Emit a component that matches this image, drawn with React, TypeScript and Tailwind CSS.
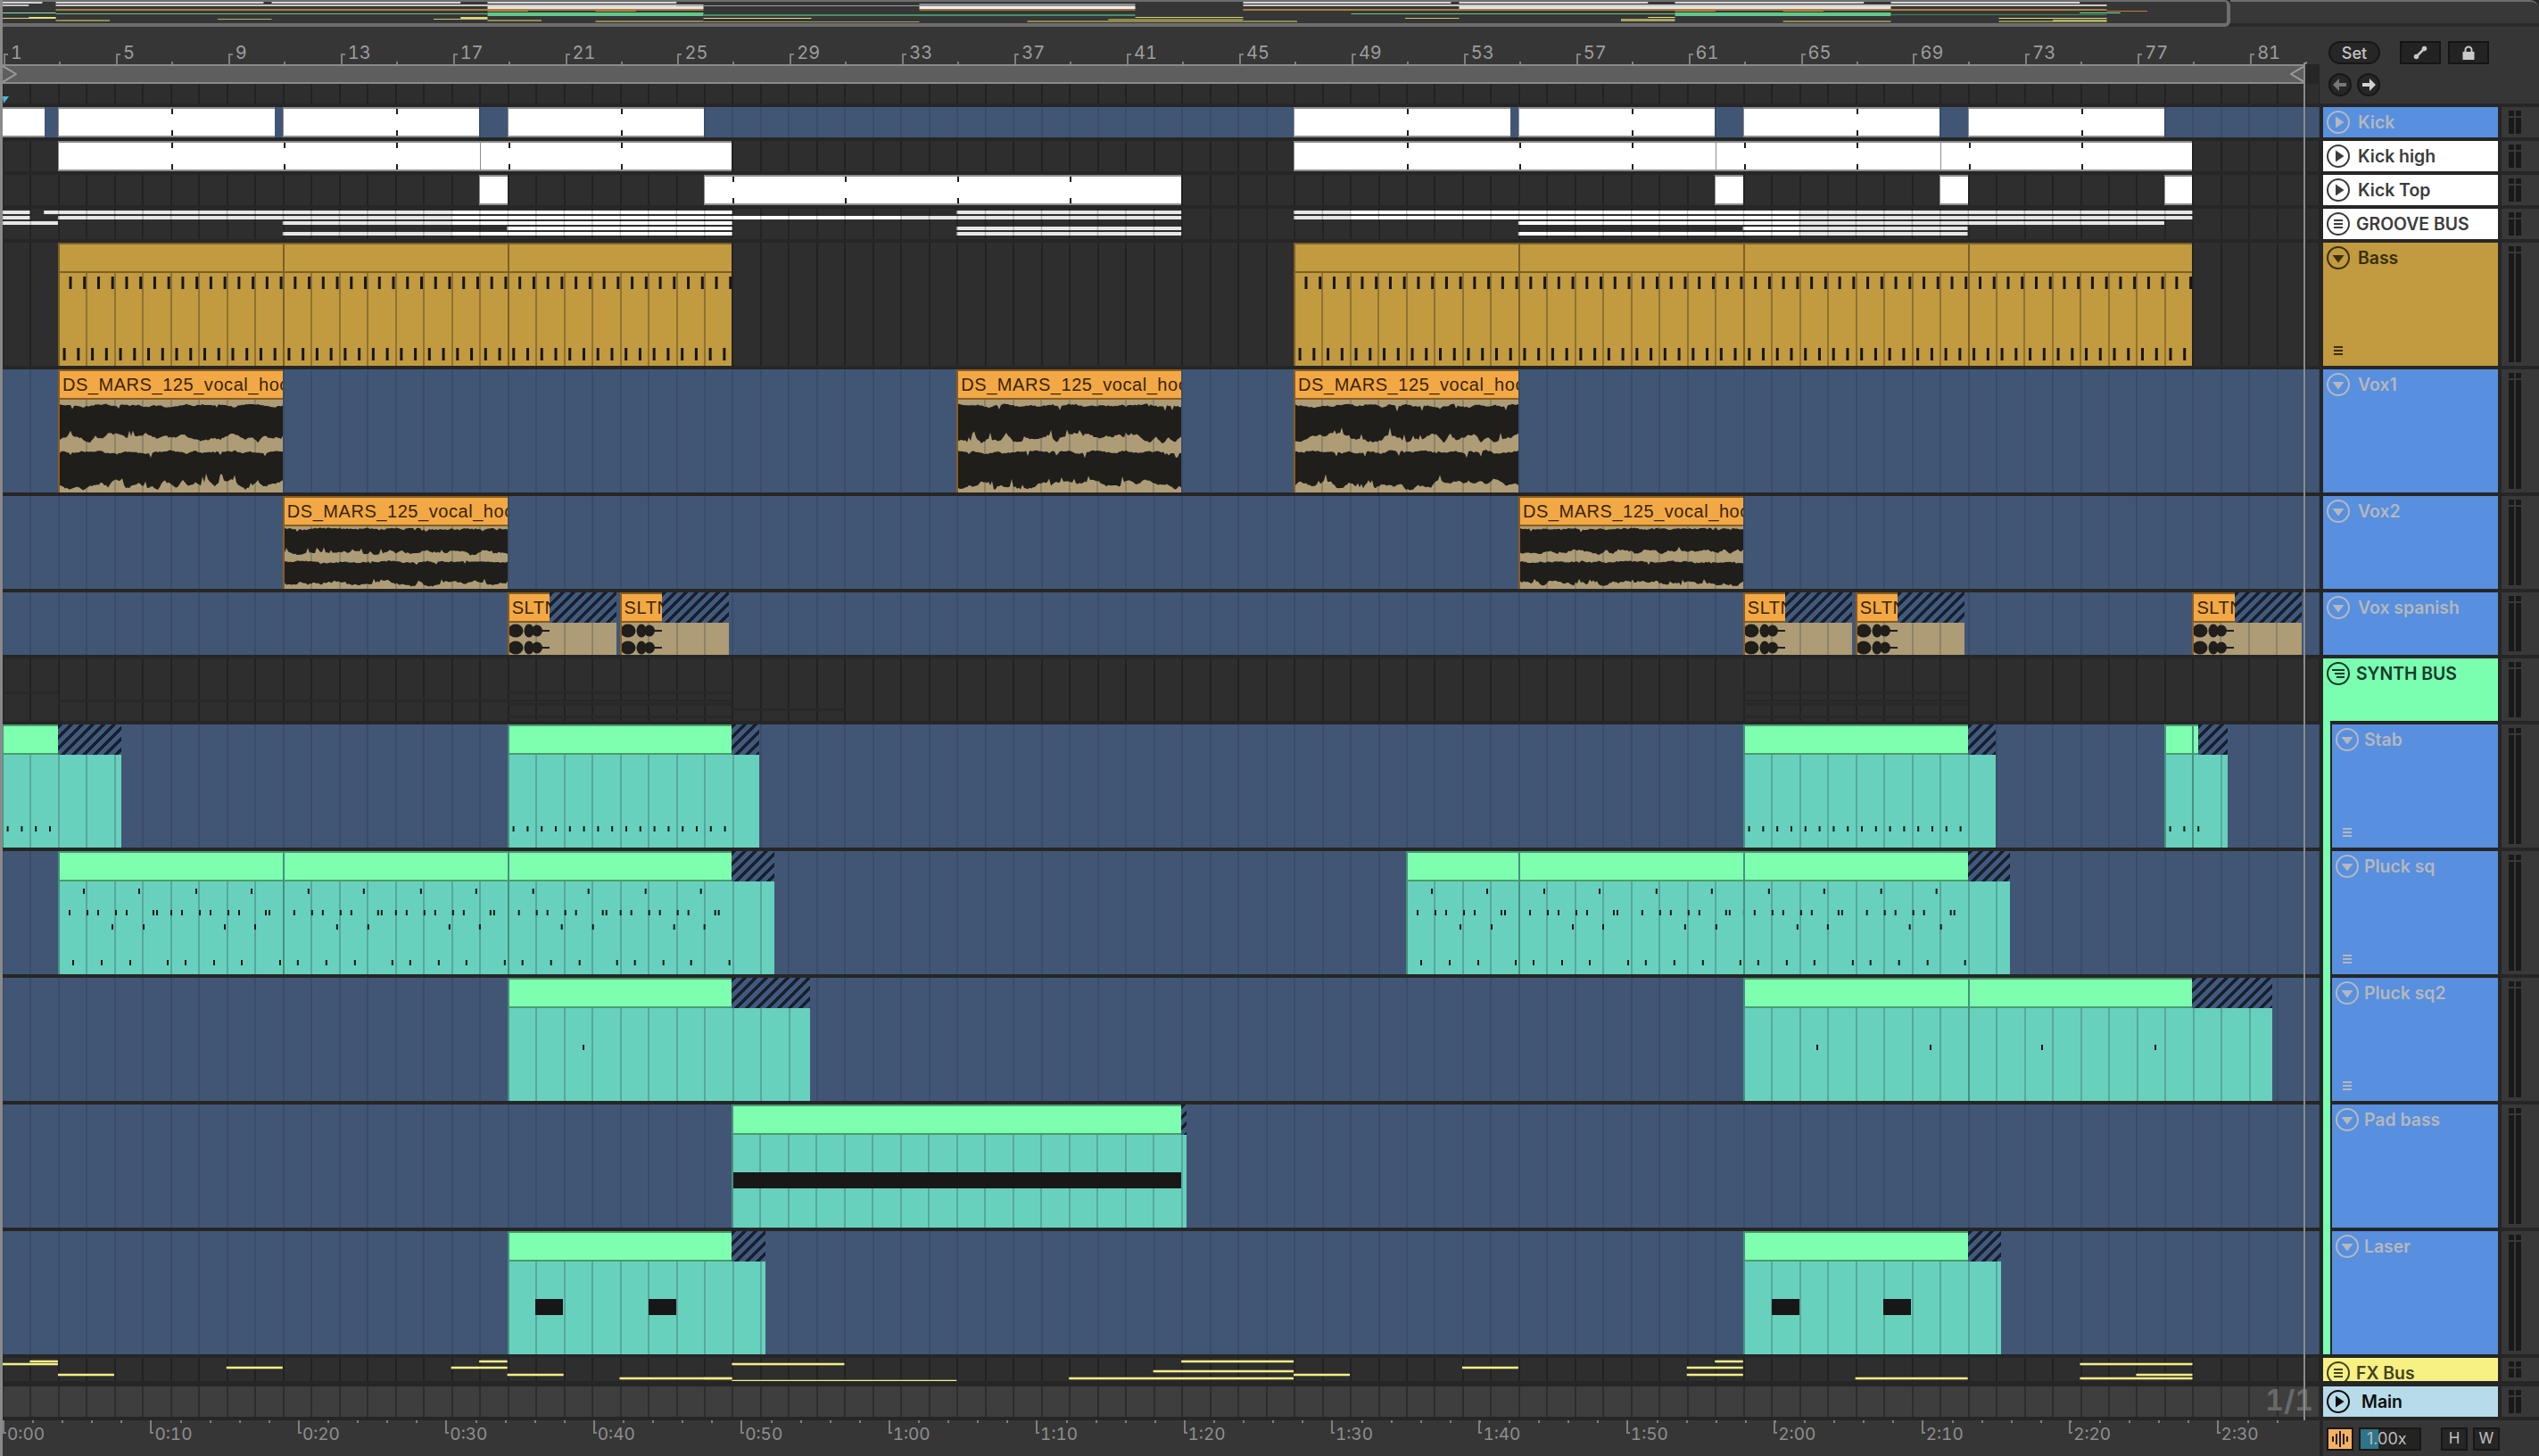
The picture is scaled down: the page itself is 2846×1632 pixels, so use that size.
import React from "react";

const BAR = 31.48;
const X = (b: number) => (b - 1) * BAR - 1;

const rng = (seed: number) => {
  let s = seed;
  return () => (s = (s * 16807) % 2147483647) / 2147483647;
};

const GRID_DARK = "bg-[#2e2e2e] bg-[repeating-linear-gradient(90deg,#222222_0_2px,transparent_2px_31.48px)] bg-position-[-1px_0]";
const GRID_BLUE = "bg-[#415675] bg-[repeating-linear-gradient(90deg,#394c6b_0_2px,transparent_2px_31.48px)] bg-position-[-1px_0]";
const GRID_MAIN = "bg-[#3e3e3e] bg-[repeating-linear-gradient(90deg,#2d2d2d_0_2px,transparent_2px_31.48px)] bg-position-[-1px_0]";

type Theme = { head: string; body: string; div: string; text: string };
const TEAL: Theme = {
  head: "bg-[#7effb0] border-[#4a9c6e]",
  body: "bg-[#67d1bd] bg-[repeating-linear-gradient(90deg,#56a89e_0_2px,transparent_2px_31.48px)]",
  div: "bg-[#45917f]",
  text: "",
};
const BASS: Theme = {
  head: "bg-[#c29a3f] border-[#7a6128]",
  body: "bg-[#c29a3f] bg-[repeating-linear-gradient(90deg,#8f7233_0_2px,transparent_2px_31.48px)]",
  div: "bg-[#7a6128]",
  text: "",
};
const VOX: Theme = {
  head: "bg-[#f2a945] border-[#8a5c20]",
  body: "bg-[#ae9c77] bg-[repeating-linear-gradient(90deg,#8d8468_0_2px,transparent_2px_31.48px)]",
  div: "bg-[#8a5c20]",
  text: "text-[#3a2408]",
};

type ClipProps = {
  from: number;
  to: number;
  end?: number;
  head?: number;
  theme: Theme;
  splits?: number[];
  label?: string;
  children?: React.ReactNode;
};

function Clip({ from, to, end, head, theme, splits = [], label, children }: ClipProps) {
  const total = X(end ?? to) - X(from);
  const headW = head ?? X(to) - X(from);
  return (
    <div className="absolute top-0 bottom-0 flex flex-col" style={{ left: X(from), width: total }}>
      <div className="flex h-[34px] shrink-0">
        <div
          className={`relative h-full shrink-0 overflow-hidden border-y-2 pl-[5px] font-['Liberation_Sans',sans-serif] text-[20px] leading-[30px] tracking-[0.55px] whitespace-nowrap ${theme.head} ${theme.text}`}
          style={{ width: headW }}
        >
          {label}
        </div>
        <div className="h-full min-w-0 flex-1 bg-[#3f5a80] bg-[repeating-linear-gradient(135deg,#1b1f28_0_4px,transparent_4px_8.5px)]" />
      </div>
      <div className={`relative min-h-0 flex-1 overflow-hidden ${theme.body}`}>{children}</div>
      {[from, ...splits].map((s) => (
        <div key={s} className={`absolute top-0 bottom-0 w-[2px] ${theme.div}`} style={{ left: X(s) - X(from) }} />
      ))}
    </div>
  );
}

function Ticks({ items, w = 2, h = 6 }: { items: [number, number][]; w?: number; h?: number }) {
  return (
    <svg className="absolute inset-0 h-full w-full">
      {items.map(([x, y], i) => (
        <rect key={i} x={x} y={y} width={w} height={h} fill="#161616" />
      ))}
    </svg>
  );
}

function smooth(n: number, step: number, r: () => number) {
  const pts = Array.from({ length: Math.ceil(n / step) + 2 }, () => r());
  return (i: number) => {
    const p = i / step;
    const k = Math.floor(p);
    const t = p - k;
    return pts[k] * (1 - t) + pts[k + 1] * t;
  };
}

function wave(w: number, top: number, bottom: number, seed: number, scale: number) {
  const r = rng(seed);
  const hi = smooth(w, 9, r);
  const lo = smooth(w, 7, r);
  const up: string[] = [];
  const down: string[] = [];
  for (let x = 0; x <= w; x += 2) {
    const a = top + hi(x) * 4 * scale + r() * 1.5 + (r() < 0.08 ? r() * 6 * scale : 0);
    const b = bottom - lo(x) * 12 * scale - r() * 2 - (r() < 0.1 ? r() * 9 * scale : 0);
    up.push(`${x} ${a.toFixed(1)}`);
    down.unshift(`${x} ${b.toFixed(1)}`);
  }
  return `M${up.join("L")}L${down.join("L")}Z`;
}

function Wave({ w, rows, seed, scale = 1 }: { w: number; rows: [number, number][]; seed: number; scale?: number }) {
  return (
    <svg className="absolute inset-0 h-full w-full">
      {rows.map(([a, b], i) => (
        <path key={i} d={wave(w, a, b, seed + i * 77, scale)} fill="#1f1e1a" />
      ))}
    </svg>
  );
}

function Blobs() {
  return (
    <svg className="absolute inset-0 h-full w-full" fill="#1f1e1a">
      {[9, 28].map((y) => (
        <g key={y}>
          <ellipse cx="9" cy={y} rx="8.5" ry="7.5" />
          <ellipse cx="24" cy={y} rx="5.5" ry="7.5" />
          <ellipse cx="33" cy={y} rx="6" ry="6.5" />
          <rect x="37" y={y - 1} width="10" height="2" />
        </g>
      ))}
    </svg>
  );
}

function KickClip({ from, to, notch = [], splits = [] }: { from: number; to: number; notch?: number[]; splits?: number[] }) {
  return (
    <div
      className="absolute top-0 bottom-0 border-y-2 border-l border-[#8e8e8e] bg-white"
      style={{ left: X(from), width: X(to) - X(from) }}
    >
      {notch.map((n) => (
        <React.Fragment key={n}>
          <div className="absolute top-0 h-[6px] w-[2px] bg-[#1e1e1e]" style={{ left: X(n) - X(from) }} />
          <div className="absolute bottom-0 h-[6px] w-[2px] bg-[#1e1e1e]" style={{ left: X(n) - X(from) }} />
        </React.Fragment>
      ))}
      {splits.map((n) => (
        <div key={n} className="absolute top-0 bottom-0 w-px bg-[#8e8e8e]" style={{ left: X(n) - X(from) }} />
      ))}
    </div>
  );
}

function Ic({ kind, className = "" }: { kind: "play" | "fold" | "lines" | "synth"; className?: string }) {
  return (
    <svg width="26" height="26" viewBox="0 0 26 26" className={`shrink-0 ${className}`}>
      <circle cx="13" cy="13" r="12" fill="none" stroke="currentColor" strokeWidth="2" />
      {kind === "play" && <polygon points="10,6.5 19.5,13 10,19.5" fill="currentColor" />}
      {kind === "fold" && <polygon points="6.5,10 19.5,10 13,18.5" fill="currentColor" />}
      {kind === "lines" && (
        <g fill="currentColor">
          <rect x="8" y="8" width="10" height="2" />
          <rect x="8" y="12" width="10" height="2" />
          <rect x="8" y="16" width="10" height="2" />
        </g>
      )}
      {kind === "synth" && (
        <g fill="currentColor">
          <rect x="6" y="8" width="14" height="2" />
          <rect x="9" y="12" width="11" height="2" />
          <rect x="11" y="16" width="9" height="2" />
        </g>
      )}
    </svg>
  );
}

function Header({
  name,
  kind,
  bg,
  fg,
  nested,
  foldLines,
  gap = "gap-[9px]",
}: {
  name: string;
  kind: "play" | "fold" | "lines" | "synth";
  bg: string;
  fg: string;
  nested?: boolean;
  foldLines?: boolean;
  gap?: string;
}) {
  const inner = (
    <div className={`relative flex h-full min-w-0 flex-1 items-start overflow-hidden pt-[4px] pl-[4px] ${gap} ${bg} ${fg}`}>
      <Ic kind={kind} />
      <span className="font-['Inter',sans-serif] text-[19.4px] leading-[26px] font-semibold whitespace-nowrap">{name}</span>
      {foldLines && (
        <div className="absolute bottom-[12px] left-[12px] flex w-[10px] flex-col gap-[2px]">
          <div className="h-[2px] bg-current" />
          <div className="h-[2px] bg-current" />
          <div className="h-[2px] bg-current" />
        </div>
      )}
    </div>
  );
  if (!nested) return <div className="flex h-full w-[196px] shrink-0">{inner}</div>;
  return (
    <div className="relative flex h-full w-[196px] shrink-0 pl-[10px]">
      <div className="absolute -top-[4px] bottom-0 left-0 w-[8px] bg-[#7affb0]" />
      {inner}
    </div>
  );
}

function Meter() {
  return (
    <div className="flex h-full w-[42px] shrink-0 gap-[2px] overflow-hidden bg-[#383838] py-[4px] pl-[8px]">
      {[0, 1].map((i) => (
        <div key={i} className="flex h-full w-[6px] flex-col gap-[2px]">
          <div className="h-[6px] shrink-0 bg-[#191919]" />
          <div className="min-h-0 flex-1 bg-[#191919]" />
        </div>
      ))}
    </div>
  );
}

function Track({
  height,
  grid,
  header,
  children,
}: {
  height: string;
  grid: string;
  header: React.ReactNode;
  children?: React.ReactNode;
}) {
  return (
    <div className={`flex shrink-0 gap-[4px] ${height}`}>
      <div className={`relative h-full w-[2597px] shrink-0 overflow-hidden ${grid}`}>{children}</div>
      {header}
      <Meter />
    </div>
  );
}

const blue = "bg-[#588fdf]";
const dim = "text-[#b5b8bc]";
const NEST = "gap-[6px]";

// ----- groove bus strips
const grooveRows: [number, number][][] = [
  [[1, 2], [2.5, 27], [35, 43], [47, 79]],
  [[1, 2], [3, 43], [47, 79]],
  [[1, 3], [11, 27], [55, 78]],
  [[19, 27], [35, 43], [63, 71]],
  [[11, 27], [35, 43], [55, 71]],
];

function GrooveLines() {
  const whites: [number, number][] = [[17, 33], [49, 65]];
  return (
    <svg className="absolute inset-0 h-full w-full">
      {grooveRows.map((row, i) => (
        <g key={i}>
          {row.map(([a, b], j) => (
            <rect key={j} x={X(a)} y={2 + i * 6} width={X(b) - X(a)} height={4} fill="#e6e6e6" />
          ))}
          {row.flatMap(([a, b], j) =>
            whites.map(([c, d], k) => {
              const s = Math.max(a, c);
              const e = Math.min(b, d);
              return e > s ? <rect key={`${j}-${k}`} x={X(s)} y={2 + i * 6} width={X(e) - X(s)} height={4} fill="#ffffff" /> : null;
            }),
          )}
        </g>
      ))}
      {Array.from({ length: 83 }, (_, i) => (
        <rect key={i} x={X(i + 1)} y={0} width={1.5} height={34} fill="#2e2e2e" opacity={0.28} />
      ))}
    </svg>
  );
}

// ----- bass note ticks
function bassTicks(from: number, to: number) {
  const out: [number, number][] = [];
  const w = X(to) - X(from);
  for (let x = 12.5; x < w - 1; x += 15.74) out.push([x, 4]);
  for (let x = 5.6; x < w - 1; x += 15.74) out.push([x, 84]);
  return out;
}

function stabTicks(bars: number, count?: number) {
  const out: [number, number][] = [];
  const n = count ?? bars * 2;
  for (let i = 0; i < n; i++) out.push([5.6 + i * 15.8, 80]);
  return out;
}

const pluckPattern: [number, number][] = [
  [28, 8], [90, 8], [154, 8], [216, 8],
  [12, 32], [32, 32], [44, 32], [64, 32], [76, 32], [106, 32], [110, 32], [126, 32], [138, 32], [158, 32], [170, 32], [190, 32], [202, 32], [232, 32], [236, 32],
  [60, 48], [95, 48], [186, 48], [220, 48],
  [16, 88], [48, 88], [80, 88], [122, 88], [142, 88], [174, 88], [205, 88], [248, 88],
];

function pluckTicks(from: number, to: number) {
  const out: [number, number][] = [];
  for (let k = 0; k < 10; k++) {
    const base = X(3) + k * 8 * BAR;
    for (const [dx, y] of pluckPattern) {
      const x = base + dx;
      if (x >= X(from) && x < X(to)) out.push([x - X(from), y]);
    }
  }
  return out;
}

function LaserBlocks({ xs }: { xs: number[] }) {
  return (
    <>
      {xs.map((x) => (
        <div key={x} className="absolute top-[42px] h-[18px] w-[31px] bg-[#171717]" style={{ left: x }} />
      ))}
    </>
  );
}

// ----- fx lines
const fx: [number, number, number][] = [
  [2, 3, 1525], [1, 3, 1528], [3, 5, 1540], [9, 11, 1532], [18, 19, 1525], [17, 19, 1532], [19, 21, 1540], [23, 27, 1544],
  [26, 27, 1544], [27, 35, 1547], [27, 31, 1528], [43, 47, 1525], [42, 47, 1536], [39, 47, 1544], [47, 49, 1540], [53, 55, 1532],
  [62, 63, 1525], [61, 63, 1532], [61, 63, 1540], [67, 71, 1544], [75, 79, 1528], [77, 79, 1540], [75, 79, 1544],
];

function FxLines() {
  return (
    <svg className="absolute inset-0 h-full w-full">
      {fx.map(([a, b, y], i) => (
        <g key={i}>
          <rect x={X(a)} y={y - 1522 - 1} width={X(b) - X(a)} height={4} fill="#8f8d55" opacity={0.55} />
          <rect x={X(a)} y={y - 1522} width={X(b) - X(a)} height={2} fill="#f3ee86" />
        </g>
      ))}
    </svg>
  );
}

// ----- overview
const OX = (b: number) => 30.25 * (b - 1) - 1;
const ov: [number, number, number, number, string][] = [
  [1, 2.5, 0, 2, "#d4d4d4"], [3, 10.7, 0, 2, "#d4d4d4"], [11, 18, 0, 2, "#d4d4d4"], [19, 26, 0, 2, "#d4d4d4"],
  [47, 54.7, 0, 2, "#d4d4d4"], [55, 62, 0, 2, "#d4d4d4"], [63, 70, 0, 2, "#d4d4d4"], [71, 78, 0, 2, "#d4d4d4"],
  [1, 2, 3, 2, "#c4c4c4"], [3, 27, 3, 2, "#c8c8c8"], [47, 79, 3, 2, "#c8c8c8"], [35, 43, 2, 3, "#8f8f8f"],
  [19, 27, 5, 3, "#e4e4e4"], [35, 43, 5, 3, "#eeeeee"], [55, 71, 5, 3, "#e4e4e4"], [26, 35, 4, 1, "#9a9a9a"],
  [3, 27, 8, 2, "#a87e3c"], [47, 79, 8, 2, "#a87e3c"], [35, 43, 8, 2, "#9a7140"],
  [19, 20.5, 10, 1, "#c07f30"], [23, 24.5, 10, 1, "#c07f30"], [63, 64.5, 10, 1, "#c07f30"], [67, 68.5, 10, 1, "#c07f30"], [79, 80.5, 10, 1, "#c07f30"],
  [1, 3, 12, 1, "#7fe6a8"], [3, 19, 13, 1, "#5fc090"], [51, 63, 13, 1, "#62c58f"], [19, 27, 12, 4, "#5ec98a"], [63, 71, 12, 4, "#5ec98a"],
  [27, 43, 14, 2, "#43916a"], [71, 79, 14, 1, "#3a8a5a"], [78, 79.5, 12, 1, "#6fe0a0"],
  [1, 3, 18, 1, "#ddd878"], [2, 3, 17, 2, "#e6e17e"], [3, 5, 20, 2, "#8f8a4a"], [9, 11, 19, 1, "#b5b06a"], [17, 19, 19, 1, "#c8c36e"], [18, 19, 17, 2, "#ddd878"],
  [19, 21, 20, 2, "#8f8a4a"], [23, 27, 21, 2, "#8f8a4a"], [27, 35, 22, 1, "#a6a260"], [27, 31, 18, 1, "#e3de7c"], [39, 47, 21, 2, "#8f8a4a"], [42, 47, 19, 3, "#8f8a4a"],
  [43, 47, 17, 1, "#d6d174"], [47, 49, 21, 2, "#8f8a4a"], [53, 55, 18, 1, "#c8c36e"], [61, 63, 19, 3, "#a6a260"], [62, 63, 17, 1, "#e3de7c"],
  [67, 71, 21, 2, "#8f8a4a"], [75, 79, 18, 1, "#e3de7c"], [75, 79, 21, 2, "#8f8a4a"], [77, 79, 20, 2, "#b5b06a"],
];

function Overview() {
  return (
    <div className="flex h-[30px] shrink-0">
      <div className="relative h-full w-[2497px] shrink-0 overflow-hidden rounded-r-[6px] border-t-2 border-r-4 border-b-4 border-[#6e6e6e] bg-[#363636]">
        <svg className="absolute inset-0 h-full w-full">
          {ov.map(([a, b, y, h, c], i) => (
            <rect key={i} x={OX(a)} y={y} width={OX(b) - OX(a)} height={h} fill={c} />
          ))}
        </svg>
      </div>
      <div className="h-full min-w-0 flex-1 rounded-tr-[10px] border-t-2 border-b-4 border-t-[#6e6e6e] border-b-[#2a2a2a] bg-[#383838]" />
    </div>
  );
}

function BarRuler() {
  const labels = Array.from({ length: 21 }, (_, i) => i * 4 + 1);
  return (
    <div className="flex h-[42px] items-end overflow-hidden bg-[#363636]">
      {labels.map((n) => (
        <div key={n} className="relative flex h-[24px] w-[125.92px] shrink-0">
          <div className="absolute bottom-0 left-[1px] h-[12px] w-[5px] border-t-2 border-l-2 border-[#7f7f7f]" />
          <div className="absolute bottom-0 left-[63px] h-[3px] w-[2px] bg-[#7f7f7f]" />
          <span className="relative pt-[1px] pl-[9px] font-['Inter',sans-serif] text-[20px] leading-[20px] text-[#9d9d9d] tabular-nums">{n}</span>
        </div>
      ))}
    </div>
  );
}

function LoopBar() {
  return (
    <div className="relative flex h-[22px] items-center justify-between">
      <div className="flex h-full w-[2580px] items-center justify-between border-y-2 border-[#8a8a8a] bg-[#5e5e5e]">
        <svg width="16" height="18" viewBox="0 0 16 18">
          <polyline points="0,0 15,9 0,18" fill="none" stroke="#9a9a9a" strokeWidth="2" />
        </svg>
        <svg width="16" height="18" viewBox="0 0 16 18">
          <polyline points="16,0 1,9 16,18" fill="none" stroke="#9a9a9a" strokeWidth="2" />
        </svg>
      </div>
    </div>
  );
}

function Controls() {
  return (
    <div className="flex h-full w-[246px] shrink-0 flex-col gap-[10px] bg-[#363636] pt-[16px] pl-[10px]">
      <div className="flex h-[26px] items-center gap-[22px]">
        <div className="flex h-[26px] w-[58px] items-center justify-center rounded-full border-2 border-[#171717] bg-[#262626] font-['Inter',sans-serif] text-[18px] font-medium text-[#c4c4c4]">
          Set
        </div>
        <div className="flex gap-[8px]">
          <div className="flex h-[26px] w-[46px] items-center justify-center border-2 border-[#151515] bg-[#232323]">
            <svg width="16" height="16" viewBox="0 0 16 16" stroke="#c9c9c9" fill="#c9c9c9">
              <line x1="3" y1="13" x2="13" y2="3" strokeWidth="2.5" />
              <circle cx="3.5" cy="12.5" r="2.4" />
              <circle cx="12.5" cy="3.5" r="2.4" />
            </svg>
          </div>
          <div className="flex h-[26px] w-[46px] items-center justify-center border-2 border-[#151515] bg-[#232323]">
            <svg width="16" height="16" viewBox="0 0 16 16">
              <path d="M4.5 7V5a3.5 3.5 0 0 1 7 0v2" fill="none" stroke="#c9c9c9" strokeWidth="2" />
              <rect x="1.5" y="7" width="13" height="9" fill="#c9c9c9" />
            </svg>
          </div>
        </div>
      </div>
      <div className="flex gap-[6px]">
        <div className="flex h-[26px] w-[26px] items-center justify-center rounded-full border-2 border-[#171717] bg-[#262626]">
          <svg width="16" height="14" viewBox="0 0 16 14" fill="#777777">
            <polygon points="0,7 7,0 7,5 15,5 15,9 7,9 7,14" />
          </svg>
        </div>
        <div className="flex h-[26px] w-[26px] items-center justify-center rounded-full border-2 border-[#171717] bg-[#262626]">
          <svg width="16" height="14" viewBox="0 0 16 14" fill="#d2d2d2">
            <polygon points="16,7 9,0 9,5 1,5 1,9 9,9 9,14" />
          </svg>
        </div>
      </div>
    </div>
  );
}

function TimeRuler() {
  const labels = ["0:00", "0:10", "0:20", "0:30", "0:40", "0:50", "1:00", "1:10", "1:20", "1:30", "1:40", "1:50", "2:00", "2:10", "2:20", "2:30"];
  return (
    <div className="relative h-full w-[2597px] shrink-0 overflow-hidden bg-[#363636]">
      <div className="absolute top-0 left-0 h-[3px] w-[2580px] bg-[repeating-linear-gradient(90deg,#7f7f7f_0_2px,transparent_2px_33.1px)]" />
      <div className="flex h-full">
        {labels.map((t) => (
          <div key={t} className="relative h-full w-[165.45px] shrink-0">
            <div className="absolute top-0 left-0 h-[15px] w-[4px] border-b-2 border-l-2 border-[#7f7f7f]" />
            <span className="absolute top-[4px] left-[5px] font-['Inter',sans-serif] text-[19px] leading-[24px] whitespace-nowrap text-[#8f8f8f] tabular-nums">
              {t}
            </span>
          </div>
        ))}
      </div>
    </div>
  );
}

function BottomControls() {
  return (
    <div className="flex h-full flex-1 bg-[#363636] pt-[8px] pl-[4px]">
      <div className="flex h-[26px] w-[30px] items-center justify-center border-2 border-[#171717] bg-[#f6b061]">
        <svg width="20" height="18" viewBox="0 0 20 18" fill="#1e1e1e">
          <rect x="1" y="6" width="2" height="6" />
          <rect x="5" y="3" width="2" height="12" />
          <rect x="9" y="0" width="2" height="18" />
          <rect x="13" y="3" width="2" height="12" />
          <rect x="17" y="6" width="2" height="6" />
        </svg>
      </div>
      <div className="relative ml-[6px] h-[26px] w-[70px] border-2 border-[#171717] bg-[#232323]">
        <div className="absolute top-0 bottom-0 left-0 w-[20px] bg-[#2f7488]" />
        <span className="absolute top-0 left-[7px] font-['Inter',sans-serif] text-[18px] leading-[22px] text-[#bdbdbd]">1.00x</span>
      </div>
      <div className="ml-[22px] flex h-[26px] w-[30px] items-center justify-center border-2 border-[#171717] bg-[#262626] font-['Inter',sans-serif] text-[17px] text-[#c0c0c0]">
        H
      </div>
      <div className="ml-[6px] flex h-[26px] w-[30px] items-center justify-center border-2 border-[#171717] bg-[#262626] font-['Inter',sans-serif] text-[17px] text-[#c0c0c0]">
        W
      </div>
    </div>
  );
}

const VOXLABEL = "DS_MARS_125_vocal_hook_01";
const KICK_CLIPS: [number, number, number][] = [
  [3, 10.73, 7], [11, 18, 15], [19, 26, 23], [47, 54.73, 51], [55, 62, 59], [63, 70, 67], [71, 78, 75],
];

export default function App() {
  return (
    <div className="relative flex h-[1632px] w-[2846px] flex-col overflow-hidden border-l-[3px] border-[#8a8a8a] bg-[#262626]">
      <Overview />
      <div className="flex h-[86px] shrink-0 gap-[0px]">
        <div className="flex w-[2597px] shrink-0 flex-col">
          <BarRuler />
          <LoopBar />
          <div className={`relative h-[22px] ${GRID_DARK}`}>
            <svg className="absolute bottom-0 left-0" width="8" height="8">
              <polygon points="0,0 7,0 1,8" fill="#4fb9d8" />
            </svg>
          </div>
        </div>
        <Controls />
      </div>
      <div className="mt-[4px] flex flex-col gap-[4px]">
        <Track height="h-[34px]" grid={GRID_BLUE} header={<Header name="Kick" kind="play" bg={blue} fg={dim} />}>
          <KickClip from={1} to={2.54} />
          {KICK_CLIPS.map(([a, b, n]) => (
            <KickClip key={a} from={a} to={b} notch={[n]} />
          ))}
        </Track>
        <Track height="h-[34px]" grid={GRID_DARK} header={<Header name="Kick high" kind="play" bg="bg-white" fg="text-[#3c3c3c]" />}>
          <KickClip from={3} to={27} notch={[7, 11, 15, 19, 23]} splits={[18]} />
          <KickClip from={47} to={79} notch={[51, 55, 59, 63, 67, 71, 75]} splits={[62, 70]} />
        </Track>
        <Track height="h-[34px]" grid={GRID_DARK} header={<Header name="Kick Top" kind="play" bg="bg-white" fg="text-[#3c3c3c]" />}>
          <KickClip from={18} to={19} />
          <KickClip from={26} to={43} notch={[27, 31, 35, 39]} />
          <KickClip from={62} to={63} />
          <KickClip from={70} to={71} />
          <KickClip from={78} to={79} />
        </Track>
        <Track height="h-[34px]" grid={GRID_DARK} header={<Header name="GROOVE BUS" kind="lines" gap="gap-[7px]" bg="bg-white" fg="text-[#3c3c3c]" />}>
          <GrooveLines />
        </Track>
        <Track height="h-[138px]" grid={GRID_DARK} header={<Header name="Bass" kind="fold" foldLines bg="bg-[#c29a3f]" fg="text-[#38300f]" />}>
          <Clip from={3} to={27} theme={BASS} splits={[11, 19]}>
            <Ticks items={bassTicks(3, 27)} w={3} h={14} />
          </Clip>
          <Clip from={47} to={79} theme={BASS} splits={[55, 63, 71]}>
            <Ticks items={bassTicks(47, 79)} w={3} h={14} />
          </Clip>
        </Track>
        <Track height="h-[138px]" grid={GRID_BLUE} header={<Header name="Vox1" kind="fold" bg={blue} fg={dim} />}>
          {[3, 35, 47].map((b, i) => (
            <Clip key={b} from={b} to={b + 8} theme={VOX} label={VOXLABEL}>
              <Wave w={252} rows={[[4, 50], [56, 102]]} seed={1234 + i} />
            </Clip>
          ))}
        </Track>
        <Track height="h-[104px]" grid={GRID_BLUE} header={<Header name="Vox2" kind="fold" bg={blue} fg={dim} />}>
          {[11, 55].map((b, i) => (
            <Clip key={b} from={b} to={b + 8} theme={VOX} label={VOXLABEL}>
              <Wave w={252} rows={[[1, 33], [38, 68]]} seed={4321 + i} scale={0.55} />
            </Clip>
          ))}
        </Track>
        <Track height="h-[70px]" grid={GRID_BLUE} header={<Header name="Vox spanish" kind="fold" bg={blue} fg={dim} />}>
          {[19, 23, 63, 67, 79].map((b) => (
            <Clip key={b} from={b} to={b + 1.5} end={b + 3.88} theme={VOX} label="SLTN_Vox">
              <Blobs />
            </Clip>
          ))}
        </Track>
        <Track height="h-[70px]" grid={GRID_DARK} header={<Header name="SYNTH BUS" kind="synth" gap="gap-[7px]" bg="bg-[#7affb0]" fg="text-[#17392c]" />}>
          <svg className="absolute inset-0 h-full w-full">
            {[[1, 3, 37], [19, 27, 37], [19, 27, 46], [19, 27, 50], [19, 27, 64], [63, 71, 37], [63, 71, 46], [63, 71, 50], [63, 71, 64], [27, 31, 56], [3, 19, 46]].map(([a, b, y], i) => (
              <rect key={i} x={X(a)} y={y} width={X(b) - X(a)} height={3} fill="#282828" />
            ))}
          </svg>
        </Track>
        <Track height="h-[138px]" grid={GRID_BLUE} header={<Header nested foldLines name="Stab" kind="fold" gap={NEST} bg={blue} fg={dim} />}>
          <Clip from={1} to={3} end={5.25} theme={TEAL}>
            <Ticks items={stabTicks(2)} />
          </Clip>
          <Clip from={19} to={27} end={27.98} theme={TEAL}>
            <Ticks items={stabTicks(8)} />
          </Clip>
          <Clip from={63} to={71} end={72} theme={TEAL}>
            <Ticks items={stabTicks(8)} />
          </Clip>
          <Clip from={78} to={79.22} end={80.25} theme={TEAL} splits={[79]}>
            <Ticks items={stabTicks(2, 3)} />
          </Clip>
        </Track>
        <Track height="h-[138px]" grid={GRID_BLUE} header={<Header nested foldLines name="Pluck sq" kind="fold" gap={NEST} bg={blue} fg={dim} />}>
          <Clip from={3} to={27} end={28.5} theme={TEAL} splits={[11, 19]}>
            <Ticks items={pluckTicks(3, 27)} />
          </Clip>
          <Clip from={51} to={71} end={72.5} theme={TEAL} splits={[55, 63]}>
            <Ticks items={pluckTicks(51, 71)} />
          </Clip>
        </Track>
        <Track height="h-[138px]" grid={GRID_BLUE} header={<Header nested foldLines name="Pluck sq2" kind="fold" gap={NEST} bg={blue} fg={dim} />}>
          <Clip from={19} to={27} end={29.78} theme={TEAL}>
            <Ticks items={[[84, 41]]} />
          </Clip>
          <Clip from={63} to={79} end={81.86} theme={TEAL} splits={[71]}>
            <Ticks items={[[82, 41], [209, 41], [334, 41], [461, 41]]} />
          </Clip>
        </Track>
        <Track height="h-[138px]" grid={GRID_BLUE} header={<Header nested name="Pad bass" kind="fold" gap={NEST} bg={blue} fg={dim} />}>
          <Clip from={27} to={43} end={43.2} theme={TEAL}>
            <div className="absolute top-[42px] left-0 h-[18px] w-[504px] bg-[#181818]" />
          </Clip>
        </Track>
        <Track height="h-[138px]" grid={GRID_BLUE} header={<Header nested name="Laser" kind="fold" gap={NEST} bg={blue} fg={dim} />}>
          <Clip from={19} to={27} end={28.2} theme={TEAL}>
            <LaserBlocks xs={[31, 158]} />
          </Clip>
          <Clip from={63} to={71} end={72.2} theme={TEAL}>
            <LaserBlocks xs={[32, 157]} />
          </Clip>
        </Track>
        <Track height="h-[26px]" grid={GRID_DARK} header={<Header name="FX Bus" kind="lines" gap="gap-[7px]" bg="bg-[#f7f184]" fg="text-[#45431f]" />}>
          <FxLines />
        </Track>
        <div className="mt-[2px]">
          <Track height="h-[34px]" grid={GRID_MAIN} header={<Header name="Main" kind="play" gap="gap-[13px]" bg="bg-[#b7dbe8]" fg="text-[#0d0d0d]" />}>
            <span className="absolute top-0 right-[7px] font-['Inter',sans-serif] text-[32px] leading-[32px] font-bold text-[#686868] tabular-nums">1/1</span>
          </Track>
        </div>
      </div>
      <div className="mt-[4px] flex h-[40px] shrink-0 gap-[4px]">
        <TimeRuler />
        <BottomControls />
      </div>
      <div className="absolute top-[70px] left-[2579px] h-[1522px] w-[2px] bg-[#8c8c8c]" />
    </div>
  );
}
